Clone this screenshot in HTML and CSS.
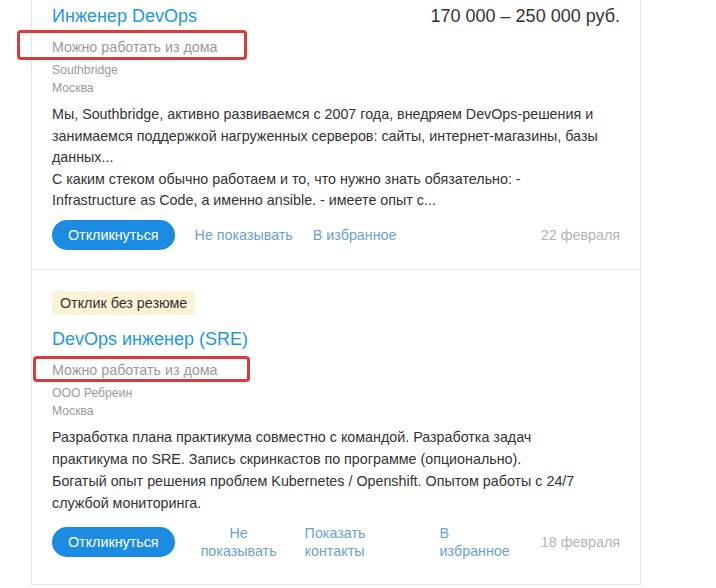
FILE: index.html
```html
<!DOCTYPE html>
<html lang="ru">
<head>
<meta charset="utf-8">
<title>Вакансии</title>
<link rel="stylesheet" href="styles.css">
</head>
<body>
<div class="page">
  <div class="list">
    <div class="card card--first">
      <div class="head">
        <a class="title" href="#">Инженер DevOps</a>
        <div class="salary">170 000 – 250 000 руб.</div>
      </div>
      <div class="remote"><span class="remote-text">Можно работать из дома</span><span class="mark mark--one"></span></div>
      <div class="company">Southbridge</div>
      <div class="city">Москва</div>
      <div class="desc">Мы, Southbridge, активно развиваемся с 2007 года, внедряем DevOps-решения и занимаемся поддержкой нагруженных серверов: сайты, интернет-магазины, базы данных...<br>С каким стеком обычно работаем и то, что нужно знать обязательно: - Infrastructure as Code, а именно ansible. - имеете опыт с...</div>
      <div class="actions">
        <a class="btn" href="#">Откликнуться</a>
        <a class="link" href="#">Не показывать</a>
        <a class="link" href="#">В избранное</a>
        <span class="date">22 февраля</span>
      </div>
    </div>
    <div class="card card--second">
      <div class="badge">Отклик без резюме</div>
      <div class="head">
        <a class="title" href="#">DevOps инженер (SRE)</a>
      </div>
      <div class="remote"><span class="remote-text">Можно работать из дома</span><span class="mark mark--two"></span></div>
      <div class="company">ООО Ребреин</div>
      <div class="city">Москва</div>
      <div class="desc desc--wide">Разработка плана практикума совместно с командой. Разработка задач практикума по SRE. Запись скринкастов по программе (опционально).<br>Богатый опыт решения проблем Kubernetes / Openshift. Опытом работы с 24/7 службой мониторинга.</div>
      <div class="actions actions--narrow">
        <a class="btn" href="#">Откликнуться</a>
        <a class="link link--hide" href="#">Не показывать</a>
        <a class="link link--contacts" href="#">Показать контакты</a>
        <a class="link link--fav" href="#">В избранное</a>
        <span class="date">18 февраля</span>
      </div>
    </div>
  </div>
</div>
</body>
</html>
```
FILE: styles.css
```css
html, body {
  margin: 0;
  padding: 0;
  background: #ffffff;
}

body {
  font-family: "Liberation Sans", Arial, sans-serif;
  color: #333333;
  overflow: hidden;
}

.page {
  padding-left: 31px;
  width: 610px;
}

.list {
  margin-top: -18px;
  border-left: 1px solid #e6e6e6;
  border-right: 1px solid #e6e6e6;
}

.card {
  position: relative;
  padding: 21px 20px 22px 20px;
  border-bottom: 1px solid #e8e8e8;
}

.card--first {
  padding-top: 22px;
  padding-bottom: 19px;
}

.head {
  display: flex;
  justify-content: space-between;
  align-items: center;
  height: 24px;
}

.title {
  font-size: 18px;
  line-height: 24px;
  color: #1d97e6;
  text-decoration: none;
}

.salary {
  font-size: 18px;
  line-height: 24px;
  color: #333333;
}

.badge {
  display: inline-block;
  background: #fcf2d6;
  color: #333333;
  font-size: 14.3px;
  line-height: 24px;
  padding: 0 8px;
  border-radius: 3px;
  margin-bottom: 12px;
}

.remote {
  position: relative;
  margin-top: 9px;
  font-size: 14.3px;
  line-height: 20px;
  color: #999999;
}

.mark {
  position: absolute;
  border: 3px solid #d93a3a;
  border-radius: 4px;
  box-sizing: border-box;
}

.mark--one {
  left: -35px;
  top: -7px;
  width: 230px;
  height: 30px;
}

.mark--two {
  left: -19px;
  top: -4px;
  width: 217px;
  height: 26px;
}

.company {
  margin-top: 4px;
  font-size: 12.2px;
  line-height: 18px;
  color: #999999;
}

.city {
  font-size: 12.2px;
  line-height: 18px;
  color: #999999;
}

.desc {
  margin-top: 7px;
  font-size: 14.3px;
  line-height: 21.5px;
  color: #333333;
  padding-right: 20px;
}

.desc--wide {
  margin-top: 6px;
  line-height: 22px;
}

.actions {
  display: flex;
  align-items: center;
  margin-top: 8px;
  min-height: 30px;
}

.actions--narrow {
  min-height: 40px;
}

.btn {
  display: inline-block;
  background: #1a8be0;
  color: #ffffff;
  font-size: 14.3px;
  line-height: 30px;
  height: 30px;
  padding: 0 16px;
  border-radius: 15px;
  text-decoration: none;
  flex: none;
}

.link {
  margin-left: 20px;
  font-size: 14.3px;
  line-height: 18px;
  color: #6a9fd4;
  text-decoration: none;
  flex: none;
}

.link--hide {
  width: 88px;
  text-align: center;
}

.link--contacts {
  width: 115px;
  margin-left: 22px;
}

.link--fav {
  width: 75px;
}

.date {
  margin-left: auto;
  font-size: 14.3px;
  color: #b3b3b3;
}
```
